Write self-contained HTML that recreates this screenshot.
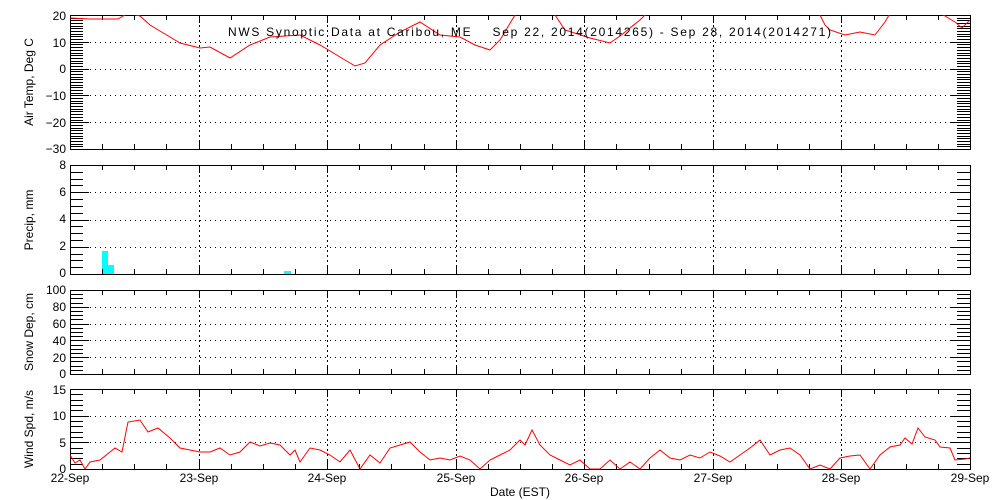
<!DOCTYPE html>
<html><head><meta charset="utf-8"><style>
body{margin:0;background:#fff;width:1000px;height:500px;overflow:hidden}
svg{display:block}
text{font-family:"Liberation Sans",sans-serif;font-size:12px;fill:#000;white-space:pre}
</style></head><body>
<svg id="s" width="1000" height="500" xmlns="http://www.w3.org/2000/svg">
<g id="g"></g>
<text x="228" y="36" font-size="13" textLength="603" lengthAdjust="spacing">NWS Synoptic Data at Caribou, ME    Sep 22, 2014(2014265) - Sep 28, 2014(2014271)</text>
<g text-anchor="end">
<text x="66" y="20">20</text><text x="66" y="47">10</text><text x="66" y="73">0</text><text x="66" y="100">−10</text><text x="66" y="127">−20</text><text x="66" y="153">−30</text>
<text x="66" y="169">8</text><text x="66" y="196">6</text><text x="66" y="223">4</text><text x="66" y="250">2</text><text x="66" y="277">0</text>
<text x="66" y="294">100</text><text x="66" y="311">80</text><text x="66" y="328">60</text><text x="66" y="345">40</text><text x="66" y="362">20</text><text x="66" y="378">0</text>
<text x="66" y="394">15</text><text x="66" y="420">10</text><text x="66" y="447">5</text><text x="66" y="473">0</text>
</g>
<g text-anchor="middle" font-size="13">
<text x="70" y="482" font-size="13">22-Sep</text><text x="199" y="482" font-size="13">23-Sep</text><text x="327" y="482" font-size="13">24-Sep</text><text x="456" y="482" font-size="13">25-Sep</text><text x="584" y="482" font-size="13">26-Sep</text><text x="713" y="482" font-size="13">27-Sep</text><text x="841" y="482" font-size="13">28-Sep</text><text x="970" y="482" font-size="13">29-Sep</text>
<text x="520" y="496" font-size="13">Date (EST)</text>
<text transform="translate(33,82) rotate(-90)" font-size="13">Air Temp, Deg C</text>
<text transform="translate(33,220) rotate(-90)" font-size="13">Precip, mm</text>
<text transform="translate(33,332) rotate(-90)" font-size="13">Snow Dep, cm</text>
<text transform="translate(33,429) rotate(-90)" font-size="13">Wind Spd, m/s</text>
</g>
</svg>
<script>
var g=document.getElementById('g'),h='';
function L(x1,y1,x2,y2,ex){h+='<line x1="'+x1+'" y1="'+y1+'" x2="'+x2+'" y2="'+y2+'" stroke="#000" '+(ex||'')+'/>';}
var P=[[15,149,20,-30,10,1],[165,274,8,0,2,0.5],[290,374,100,0,20,5],[389,469,15,0,5,1]];
var X0=70,X1=970,D=900/7;
h+='<rect x="102" y="251" width="6" height="23" fill="#0ff"/><rect x="108" y="265" width="6" height="9" fill="#0ff"/><rect x="284" y="271" width="7" height="3" fill="#0ff"/>';
P.forEach(function(p){
 var t=p[0],b=p[1],hi=p[2],lo=p[3],maj=p[4],mi=p[5];
 var sc=(b-t)/(hi-lo);
 for(var v=lo+maj;v<hi-1e-6;v+=maj){var y=Math.round(b-(v-lo)*sc)+.5;L(X0,y,X1,y,'stroke-dasharray="1,4"');}
 for(var d=1;d<7;d++){var x=Math.round(X0+d*D)+.5;L(x,t,x,b,'stroke-dasharray="2,3"');}
 for(var v=lo;v<=hi+1e-6;v+=mi){var y=Math.round(b-(v-lo)*sc)+.5;var mj=Math.abs((v-lo)/maj-Math.round((v-lo)/maj))<1e-6;
  L(X0,y,X0+(mj?19:13),y);L(X1-(mj?19:13),y,X1,y);}
 for(var q=1;q<28;q++){var x=Math.round(X0+q*D/4)+.5;var l=q%4==0?8:5;L(x,t,x,t+l);L(x,b-l,x,b);}
 h+='<rect x="70.5" y="'+(t+.5)+'" width="900" height="'+(b-t)+'" fill="none" stroke="#000"/>';
});
var T=[[70,18],[90,19],[118,19],[128,13],[140,16],[150,25],[170,37],[180,43],[200,48],[210,47],[230,58],[250,45],[270,37],[300,35],[320,45],[340,57],[355,66],[365,63],[380,45],[400,32],[420,22],[440,35],[460,37],[475,45],[490,50],[500,40],[515,15],[525,0],[540,-5],[555,15],[565,30],[590,38],[610,43],[620,36],[640,20],[655,5],[670,-10],[800,-10],[815,5],[825,25],[830,30],[845,35],[860,32],[875,35],[885,22],[895,5],[905,-10],[935,10],[945,16],[955,22],[962,28],[970,20]];
var W=[[70,455],[75,463],[80,460],[85,469],[90,462],[100,460],[115,448],[122,452],[128,422],[140,420],[148,432],[158,428],[170,438],[180,448],[200,452],[210,452],[220,448],[230,455],[240,452],[250,442],[260,446],[270,443],[280,445],[290,455],[295,450],[300,462],[310,448],[320,450],[330,455],[340,462],[350,450],[360,469],[370,455],[380,463],[390,448],[400,445],[410,442],[420,452],[430,460],[440,458],[450,460],[460,456],[470,460],[480,469],[490,460],[500,455],[510,450],[520,440],[525,445],[532,430],[540,445],[550,455],[560,460],[570,465],[580,460],[590,469],[600,469],[610,460],[620,469],[630,462],[640,469],[650,458],[660,450],[670,458],[680,460],[690,455],[700,458],[710,452],[720,456],[730,462],[740,455],[750,448],[760,440],[770,455],[780,450],[790,448],[800,455],[810,469],[820,465],[830,469],[840,458],[850,456],[860,455],[870,469],[880,455],[890,447],[900,445],[905,438],[912,444],[918,428],[925,437],[935,440],[940,447],[950,448],[955,460],[965,459],[970,458]];
h+='<defs><clipPath id="c1"><rect x="70" y="15" width="901" height="135"/></clipPath></defs>';
h+='<polyline clip-path="url(#c1)" fill="none" stroke="#f00" points="'+T.join(' ')+'"/>';
h+='<polyline fill="none" stroke="#f00" points="'+W.join(' ')+'"/>';
g.innerHTML=h;
</script>
</body></html>
